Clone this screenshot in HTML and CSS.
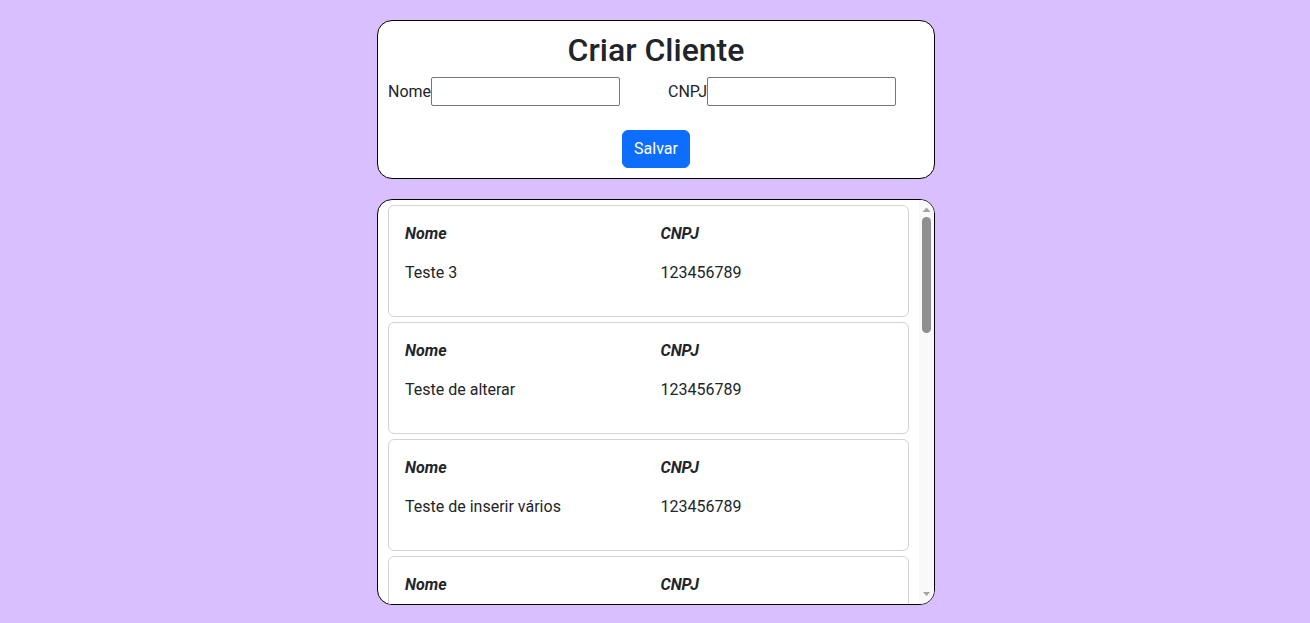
FILE: index.html
```html
<!DOCTYPE html>
<html lang="pt-BR">
<head>
<meta charset="utf-8">
<title>Criar Cliente</title>
<link rel="stylesheet" href="styles.css">
</head>
<body>
  <main class="page">
    <section class="form-card">
      <h2 class="title">Criar Cliente</h2>
      <div class="form-row">
        <div class="field">
          <label for="nome">Nome</label>
          <input id="nome" type="text">
        </div>
        <div class="field">
          <label for="cnpj">CNPJ</label>
          <input id="cnpj" type="text">
        </div>
      </div>
      <div class="actions">
        <button class="btn-primary" type="button">Salvar</button>
      </div>
    </section>

    <section class="list">
      <div class="list-scroll">
        <div class="client-card">
          <div class="row head"><span>Nome</span><span>CNPJ</span></div>
          <div class="row data"><span>Teste 3</span><span>123456789</span></div>
        </div>
        <div class="client-card">
          <div class="row head"><span>Nome</span><span>CNPJ</span></div>
          <div class="row data"><span>Teste de alterar</span><span>123456789</span></div>
        </div>
        <div class="client-card">
          <div class="row head"><span>Nome</span><span>CNPJ</span></div>
          <div class="row data"><span>Teste de inserir vários</span><span>123456789</span></div>
        </div>
        <div class="client-card">
          <div class="row head"><span>Nome</span><span>CNPJ</span></div>
          <div class="row data"><span>Teste 4</span><span>123456789</span></div>
        </div>
      </div>
      <div class="scrollbar" aria-hidden="true">
        <div class="sb-btn">
          <svg width="15" height="17" viewBox="0 0 15 17"><polygon points="3.5,12 11.5,12 7.5,7.5" fill="#a3a3a3"/></svg>
        </div>
        <div class="sb-track">
          <div class="sb-thumb"></div>
        </div>
        <div class="sb-btn">
          <svg width="15" height="17" viewBox="0 0 15 17"><polygon points="4,5 11,5 7.5,9" fill="#a3a3a3"/></svg>
        </div>
      </div>
    </section>
  </main>
</body>
</html>
```
FILE: styles.css
```css
* { box-sizing: border-box; }

html, body {
  margin: 0;
  padding: 0;
}

body {
  background: #d9bffd;
  font-family: Roboto, "Noto Sans", "Liberation Sans", sans-serif;
  font-size: 16px;
  line-height: 24px;
  color: #212529;
}

.page {
  padding: 20px 0 0 2px;
}

.form-card {
  width: 558px;
  margin: 0 auto;
  background: #fff;
  border: 1px solid #000;
  border-radius: 15px;
  padding: 10px;
}

.title {
  margin: 0 0 8px;
  text-align: center;
  font-size: 32px;
  font-weight: 500;
  line-height: 38px;
}

.form-row {
  display: grid;
  grid-template-columns: 1fr 1fr;
  column-gap: 24px;
}

.field {
  display: flex;
  align-items: center;
}

.field input {
  width: 189px;
  height: 29px;
  border: 1px solid #767676;
  border-radius: 2px;
  padding: 1px 2px;
  font: inherit;
  background: #fff;
}

.actions {
  display: flex;
  justify-content: center;
  margin-top: 24px;
}

.btn-primary {
  background: #0d6efd;
  color: #fff;
  border: 1px solid #0d6efd;
  border-radius: 6px;
  padding: 6px 11px;
  font: inherit;
  line-height: 24px;
  height: 38px;
}

.list {
  width: 558px;
  height: 406px;
  margin: 20px auto 0;
  background: #fff;
  border: 1px solid #000;
  border-radius: 15px;
  overflow: hidden;
  display: flex;
}

.list-scroll {
  flex: 1;
  min-width: 0;
  padding: 5px 10px;
  overflow: hidden;
  display: flex;
  flex-direction: column;
  gap: 5px;
}

.scrollbar {
  width: 15px;
  flex-shrink: 0;
  background: #f9f9f9;
  display: flex;
  flex-direction: column;
}

.sb-btn {
  height: 17px;
  flex-shrink: 0;
  display: flex;
}

.sb-track {
  flex: 1;
  padding: 0 3px;
}

.sb-thumb {
  height: 116px;
  background: #8f8f8f;
  border-radius: 5px;
}

.client-card {
  flex-shrink: 0;
  border: 1px solid #d3d3d3;
  border-radius: 6px;
  padding: 16px;
  background: #fff;
}

.row {
  display: grid;
  grid-template-columns: 1fr 1fr;
  column-gap: 24px;
}

.row.head {
  font-weight: 700;
  font-style: italic;
  margin-bottom: 15px;
}

.row.data {
  margin-bottom: 15px;
}
```
